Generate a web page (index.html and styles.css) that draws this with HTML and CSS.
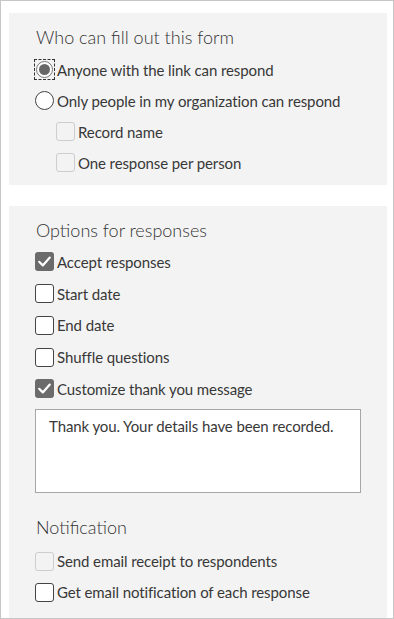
FILE: index.html
```html
<!DOCTYPE html>
<html>
<head lang="en">
    <meta charset="UTF-8">
    <title>Settings</title>
    <link rel="stylesheet" href="styles.css">
</head>
<body>
<div class="frame">
    <div class="panel who">
        <div class="title">Who can fill out this form</div>
        <div class="row">
            <span class="focus"><span class="radio on"></span></span>
            <span class="label">Anyone with the link can respond</span>
        </div>
        <div class="row">
            <span class="radio"></span>
            <span class="label">Only people in my organization can respond</span>
        </div>
        <div class="row sub">
            <span class="box off"></span>
            <span class="label">Record name</span>
        </div>
        <div class="row sub">
            <span class="box off"></span>
            <span class="label">One response per person</span>
        </div>
    </div>

    <div class="panel opts">
        <div class="title">Options for responses</div>
        <div class="list">
            <div class="row">
                <span class="box on">
                    <svg viewBox="0 0 19 19" width="19" height="19"><path d="M4.2 9.8 L7.8 13.4 L14.8 5.6" fill="none" stroke="#fff" stroke-width="2.2" stroke-linecap="round" stroke-linejoin="round"/></svg>
                </span>
                <span class="label">Accept responses</span>
            </div>
            <div class="row">
                <span class="box"></span>
                <span class="label">Start date</span>
            </div>
            <div class="row">
                <span class="box"></span>
                <span class="label">End date</span>
            </div>
            <div class="row">
                <span class="box"></span>
                <span class="label">Shuffle questions</span>
            </div>
            <div class="row">
                <span class="box on">
                    <svg viewBox="0 0 19 19" width="19" height="19"><path d="M4.2 9.8 L7.8 13.4 L14.8 5.6" fill="none" stroke="#fff" stroke-width="2.2" stroke-linecap="round" stroke-linejoin="round"/></svg>
                </span>
                <span class="label">Customize thank you message</span>
            </div>
        </div>
        <div class="message">Thank you. Your details have been recorded.</div>

        <div class="title notify">Notification</div>
        <div class="list short">
            <div class="row">
                <span class="box off"></span>
                <span class="label">Send email receipt to respondents</span>
            </div>
            <div class="row">
                <span class="box"></span>
                <span class="label">Get email notification of each response</span>
            </div>
        </div>
    </div>
</div>
</body>
</html>
```

FILE: styles.css
```css
* {
    margin: 0;
    padding: 0;
}

body {
    font-family: Lato, "Liberation Sans", sans-serif;
    color: #383838;
    background: #fff;
}

.frame {
    width: 394px;
    height: 619px;
    box-sizing: border-box;
    border: 1px solid #c6c6c6;
    padding: 12px 6px 0 8px;
    display: flex;
    flex-direction: column;
    gap: 21px;
}

.panel {
    background: #f3f3f3;
    padding: 12px 26px 7px 26px;
}

.title {
    font-size: 18px;
    font-weight: 300;
    color: #333;
    line-height: 24px;
    padding-left: 1px;
    margin-bottom: 5px;
}

.opts {
    padding-bottom: 5px;
    flex: 1;
}

.opts .title {
    margin-bottom: 4px;
}

.row {
    display: flex;
    align-items: center;
    gap: 3px;
    height: 31px;
    font-size: 15px;
    letter-spacing: -0.1px;
}

.list .row {
    height: 31.75px;
}

.list.short {
    margin-top: 7px;
}

.list.short .row {
    height: 31px;
}

.sub {
    padding-left: 21px;
}

.focus {
    width: 21px;
    height: 21px;
    box-sizing: border-box;
    border: 1px dashed #333;
    display: flex;
    align-items: center;
    justify-content: center;
    margin-left: -1px;
    margin-right: -1px;
}

.radio {
    width: 19px;
    height: 19px;
    box-sizing: border-box;
    border: 1px solid #444;
    border-radius: 50%;
    background: #fff;
    display: flex;
    align-items: center;
    justify-content: center;
}

.radio.on {
    width: 17px;
    height: 17px;
    border-color: #777;
}

.radio.on::after {
    content: "";
    width: 11px;
    height: 11px;
    border-radius: 50%;
    background: #666;
}

.box {
    width: 19px;
    height: 19px;
    box-sizing: border-box;
    border: 1px solid #444;
    border-radius: 3px;
    background: #fff;
    flex-shrink: 0;
}

.box.off {
    border-color: #cdcdcd;
    background: #f3f3f3;
}

.box.on {
    border: none;
    background: #6b6b6b;
}

.box svg {
    display: block;
}

.message {
    margin-top: 4px;
    height: 84px;
    box-sizing: border-box;
    border: 1px solid #a6a6a6;
    background: #fff;
    padding: 6px 13px;
    font-size: 15px;
    line-height: 20px;
    letter-spacing: -0.1px;
}

.notify {
    margin-top: 22px;
    margin-bottom: 4px;
}
```
